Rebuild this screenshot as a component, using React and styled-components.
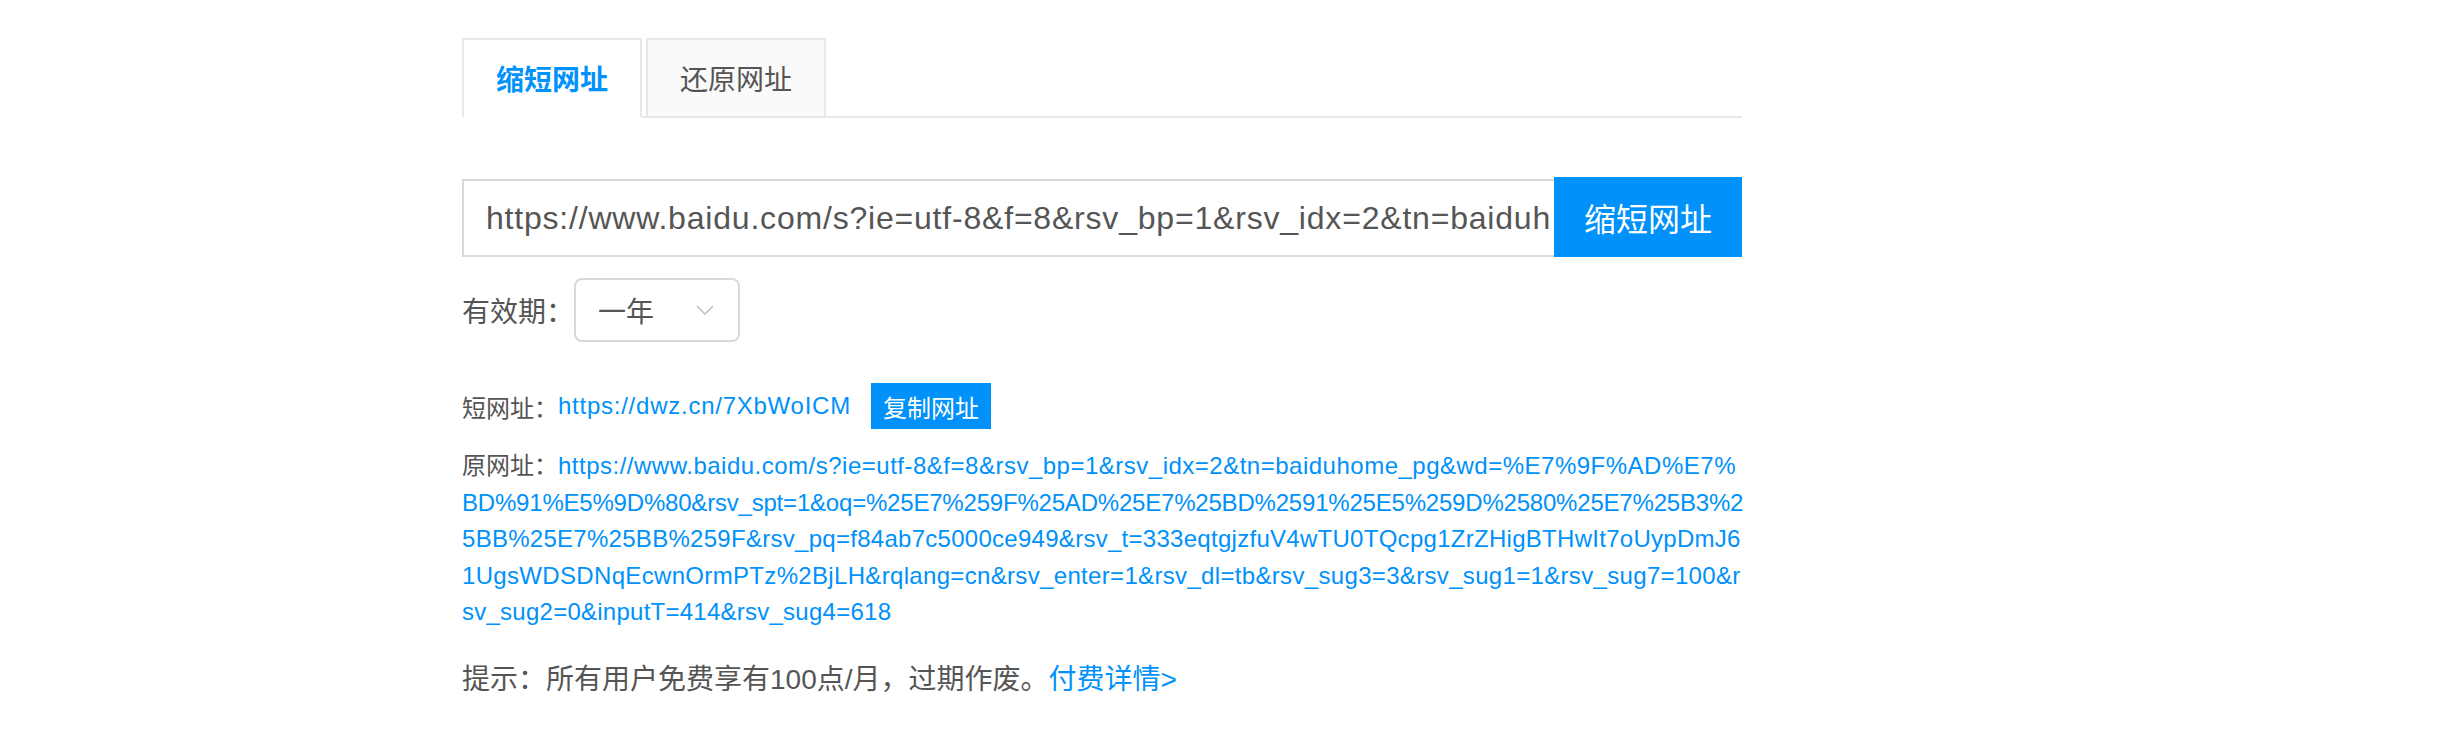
import React, { useState } from "react";
import styled, { createGlobalStyle } from "styled-components";

const LONG_URL =
  "https://www.baidu.com/s?ie=utf-8&f=8&rsv_bp=1&rsv_idx=2&tn=baiduhome_pg&wd=%E7%9F%AD%E7%BD%91%E5%9D%80&rsv_spt=1&oq=%25E7%259F%25AD%25E7%25BD%2591%25E5%259D%2580%25E7%25B3%25BB%25E7%25BB%259F&rsv_pq=f84ab7c5000ce949&rsv_t=333eqtgjzfuV4wTU0TQcpg1ZrZHigBTHwIt7oUypDmJ61UgsWDSDNqEcwnOrmPTz%2BjLH&rqlang=cn&rsv_enter=1&rsv_dl=tb&rsv_sug3=3&rsv_sug1=1&rsv_sug7=100&rsv_sug2=0&inputT=414&rsv_sug4=618";

/* the long URL as it wraps in the 1280px column, with the tracking of each line */
const URL_LINES = [
  { text: "https://www.baidu.com/s?ie=utf-8&f=8&rsv_bp=1&rsv_idx=2&tn=baiduhome_pg&wd=%E7%9F%AD%E7%", spacing: 0.5 },
  { text: "BD%91%E5%9D%80&rsv_spt=1&oq=%25E7%259F%25AD%25E7%25BD%2591%25E5%259D%2580%25E7%25B3%2", spacing: -0.2 },
  { text: "5BB%25E7%25BB%259F&rsv_pq=f84ab7c5000ce949&rsv_t=333eqtgjzfuV4wTU0TQcpg1ZrZHigBTHwIt7oUypDmJ6", spacing: 0.28 },
  { text: "1UgsWDSDNqEcwnOrmPTz%2BjLH&rqlang=cn&rsv_enter=1&rsv_dl=tb&rsv_sug3=3&rsv_sug1=1&rsv_sug7=100&r", spacing: 0.33 },
  { text: "sv_sug2=0&inputT=414&rsv_sug4=618", spacing: 0.25 },
];

const SHORT_URL = "https://dwz.cn/7XbWoICM";

const BLUE = "#0091fa";
const TEXT = "#555555";

const Global = createGlobalStyle`
  html, body {
    margin: 0;
    padding: 0;
    background: #ffffff;
  }
  body {
    font-family: "Liberation Sans", "Noto Sans CJK SC", sans-serif;
    color: ${TEXT};
  }
  * { box-sizing: border-box; }
`;

const Page = styled.div`
  width: 1280px;
  margin-left: 462px;
  padding-top: 38px;
`;

const TabBar = styled.div`
  display: flex;
  gap: 4px;
  border-bottom: 2px solid #e8e8e8;
  height: 80px;
`;

const Tab = styled.div`
  width: 180px;
  height: 80px;
  margin-bottom: -2px;
  border: 2px solid #e8e8e8;
  border-bottom-color: ${(p) => (p.$active ? "#ffffff" : "#e8e8e8")};
  background: ${(p) => (p.$active ? "#ffffff" : "#fafafa")};
  color: ${(p) => (p.$active ? BLUE : TEXT)};
  font-weight: ${(p) => (p.$active ? 700 : 400)};
  font-size: 28px;
  display: flex;
  align-items: center;
  justify-content: center;
  cursor: pointer;
`;

const InputRow = styled.div`
  display: flex;
  height: 80px;
  margin-top: 59px;
`;

const UrlInput = styled.input`
  flex: 1;
  min-width: 0;
  height: 78px;
  align-self: flex-end;
  border: 2px solid #d9d9d9;
  border-right: none;
  padding: 0 4px 0 22px;
  font-family: "Liberation Sans", "Noto Sans CJK SC", sans-serif;
  font-size: 32px;
  letter-spacing: 0.8px;
  color: ${TEXT};
  outline: none;
  background: #fff;
`;

const ShortenButton = styled.button`
  width: 188px;
  height: 80px;
  border: none;
  background: ${BLUE};
  color: #ffffff;
  font-family: "Liberation Sans", "Noto Sans CJK SC", sans-serif;
  font-size: 32px;
  cursor: pointer;
`;

const ExpiryRow = styled.div`
  display: flex;
  align-items: center;
  height: 64px;
  margin-top: 21px;
`;

const Label = styled.span`
  font-size: ${(p) => p.$size || 24}px;
  color: ${TEXT};
  white-space: nowrap;
`;

const Select = styled.div`
  width: 166px;
  height: 64px;
  border: 2px solid #d9d9d9;
  border-radius: 8px;
  padding: 0 24px 0 22px;
  display: flex;
  align-items: center;
  justify-content: space-between;
  font-size: 28px;
  color: ${TEXT};
  cursor: pointer;
`;

const ShortRow = styled.div`
  display: flex;
  align-items: center;
  height: 46px;
  margin-top: 41px;
`;

const Link = styled.a`
  color: ${BLUE};
  text-decoration: none;
  font-size: 24px;
  letter-spacing: 0.75px;
`;

const UrlSegment = styled.span`
  letter-spacing: ${(p) => p.$spacing}px;
`;

const CopyButton = styled.button`
  height: 46px;
  margin-left: 20px;
  padding: 0 12px;
  border: none;
  background: ${BLUE};
  color: #ffffff;
  font-family: "Liberation Sans", "Noto Sans CJK SC", sans-serif;
  font-size: 24px;
  cursor: pointer;
`;

const OrigPara = styled.p`
  margin: 19px 0 0;
  font-size: 24px;
  line-height: 36.5px;
  white-space: nowrap;
  color: ${TEXT};
`;

const Tip = styled.p`
  margin: 28px 0 0;
  font-size: 28px;
  line-height: 42px;
  color: ${TEXT};
`;

const TipLink = styled.a`
  color: ${BLUE};
  text-decoration: none;
`;

function Chevron() {
  return (
    <svg width="18" height="10" viewBox="0 0 18 10" fill="none">
      <polyline points="1,1 9,9 17,1" stroke="#bfbfbf" strokeWidth="1.6" />
    </svg>
  );
}

export default function App() {
  const [tab, setTab] = useState(0);
  return (
    <>
      <Global />
      <Page>
        <TabBar>
          <Tab $active={tab === 0} onClick={() => setTab(0)}>
            缩短网址
          </Tab>
          <Tab $active={tab === 1} onClick={() => setTab(1)}>
            还原网址
          </Tab>
        </TabBar>

        <InputRow>
          <UrlInput readOnly value={LONG_URL} />
          <ShortenButton>缩短网址</ShortenButton>
        </InputRow>

        <ExpiryRow>
          <Label $size={28}>有效期：</Label>
          <Select>
            <span>一年</span>
            <Chevron />
          </Select>
        </ExpiryRow>

        <ShortRow>
          <Label>短网址：</Label>
          <Link href="#">{SHORT_URL}</Link>
          <CopyButton>复制网址</CopyButton>
        </ShortRow>

        <OrigPara>
          <Label>原网址：</Label>
          <Link href="#">
            {URL_LINES.map((line, i) => (
              <React.Fragment key={i}>
                {i > 0 && <br />}
                <UrlSegment $spacing={line.spacing}>{line.text}</UrlSegment>
              </React.Fragment>
            ))}
          </Link>
        </OrigPara>

        <Tip>
          提示：所有用户免费享有100点/月，过期作废。<TipLink href="#">付费详情&gt;</TipLink>
        </Tip>
      </Page>
    </>
  );
}
